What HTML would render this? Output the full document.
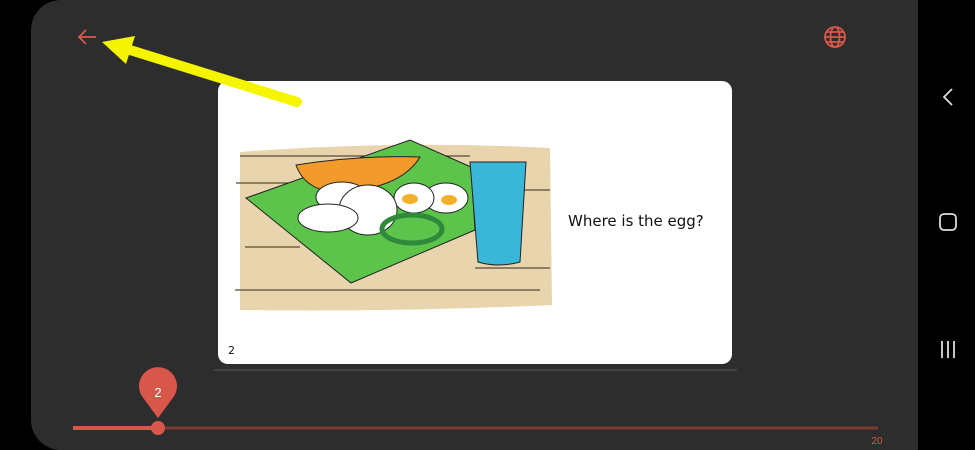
<!DOCTYPE html>
<html><head><style>
html,body{margin:0;padding:0;width:975px;height:450px;background:#000;overflow:hidden;font-family:"Liberation Sans",sans-serif}
.app{position:absolute;left:31px;top:0;width:887px;height:450px;background:#2d2d2d;border-radius:30px 0 0 30px}
.nav{position:absolute;left:918px;top:0;width:57px;height:450px;background:#000}
.card{position:absolute;left:218px;top:81px;width:514px;height:283px;background:#fff;border-radius:10px}
.txt{position:absolute;left:568px;top:212px;font-size:15px;color:#111;font-family:"DejaVu Sans",sans-serif}
.pg{position:absolute;left:228px;top:344px;font-size:11px;color:#111;font-family:"DejaVu Sans",sans-serif}
</style></head><body>
<div class="app"></div>
<div class="nav">
<svg width="57" height="450" style="position:absolute;left:0;top:0">
<path d="M34 89 L26 97 L34 105" stroke="#ddd" stroke-width="1.8" fill="none"/>
<rect x="22" y="214" width="16" height="16" rx="4" stroke="#ddd" stroke-width="1.8" fill="none"/>
<path d="M24 341v17M30 341v17M36 341v17" stroke="#ddd" stroke-width="1.8"/>
</svg></div>
<div class="card"></div>
<svg width="975" height="450" style="position:absolute;left:0;top:0">
<path d="M240 152 Q400 140 550 148 L552 305 Q400 312 240 310 Z" fill="#e8d4ad"/>
<path d="M240 156 H470 M236 183 H300 M470 190 H550 M245 247 H300 M235 290 H540 M475 268 H550" stroke="#5a4a38" stroke-width="1.2"/>
<path d="M246 198 L410 140 L471 167 L475 230 L351 283 Z" fill="#5cc44a" stroke="#222" stroke-width="1"/>
<path d="M296 165 Q360 155 420 157 Q400 190 335 192 Q305 190 296 165Z" fill="#f39a2c" stroke="#222"/>
<ellipse cx="446" cy="198" rx="22" ry="15" fill="#fff" stroke="#222"/>
<ellipse cx="449" cy="200" rx="8" ry="5" fill="#f3b12a"/>
<ellipse cx="414" cy="198" rx="20" ry="15" fill="#fff" stroke="#222"/>
<ellipse cx="410" cy="199" rx="8" ry="5" fill="#f3b12a"/>
<ellipse cx="342" cy="197" rx="26" ry="15" fill="#fff" stroke="#222"/>
<ellipse cx="368" cy="210" rx="29" ry="25" fill="#fff" stroke="#222"/>
<ellipse cx="328" cy="218" rx="30" ry="14" fill="#fff" stroke="#222"/>
<ellipse cx="412" cy="229" rx="30" ry="14" fill="none" stroke="#2e8a3a" stroke-width="5"/>
<path d="M470 162 H526 L520 262 Q498 268 478 262 Z" fill="#3ab6d8" stroke="#222"/>
<path d="M96 37 H79 M86 30 L79 37 L86 44" stroke="#d9574a" stroke-width="1.8" fill="none"/>
<g stroke="#d9574a" stroke-width="1.8" fill="none"><circle cx="835" cy="37" r="10"/><ellipse cx="835" cy="37" rx="4.5" ry="10"/><path d="M825 37h20M827 32h16M827 42h16"/></g>
<path d="M297 102 L130 50" stroke="#f5f500" stroke-width="10" stroke-linecap="round"/>
<path d="M102 42 L135 36 L126 64 Z" fill="#f5f500"/>
<line x1="214" y1="370" x2="737" y2="370" stroke="#4a4a4a" stroke-width="1.5"/>
<line x1="73" y1="428" x2="878" y2="428" stroke="#7a3a34" stroke-width="3"/>
<line x1="73" y1="428" x2="158" y2="428" stroke="#d9574a" stroke-width="4"/>
<circle cx="158" cy="428" r="7" fill="#d9574a"/>
<path d="M158 418 L144 399 A19 19 0 1 1 172 399 Z" fill="#d9574a"/>
<text x="158" y="397" fill="#fff" font-size="13" text-anchor="middle" font-family="Liberation Sans">2</text>
<text x="877" y="444" fill="#d9574a" font-size="10" text-anchor="middle" font-family="Liberation Sans">20</text>
</svg>
<div class="txt">Where is the egg?</div>
<div class="pg">2</div>
</body></html>
